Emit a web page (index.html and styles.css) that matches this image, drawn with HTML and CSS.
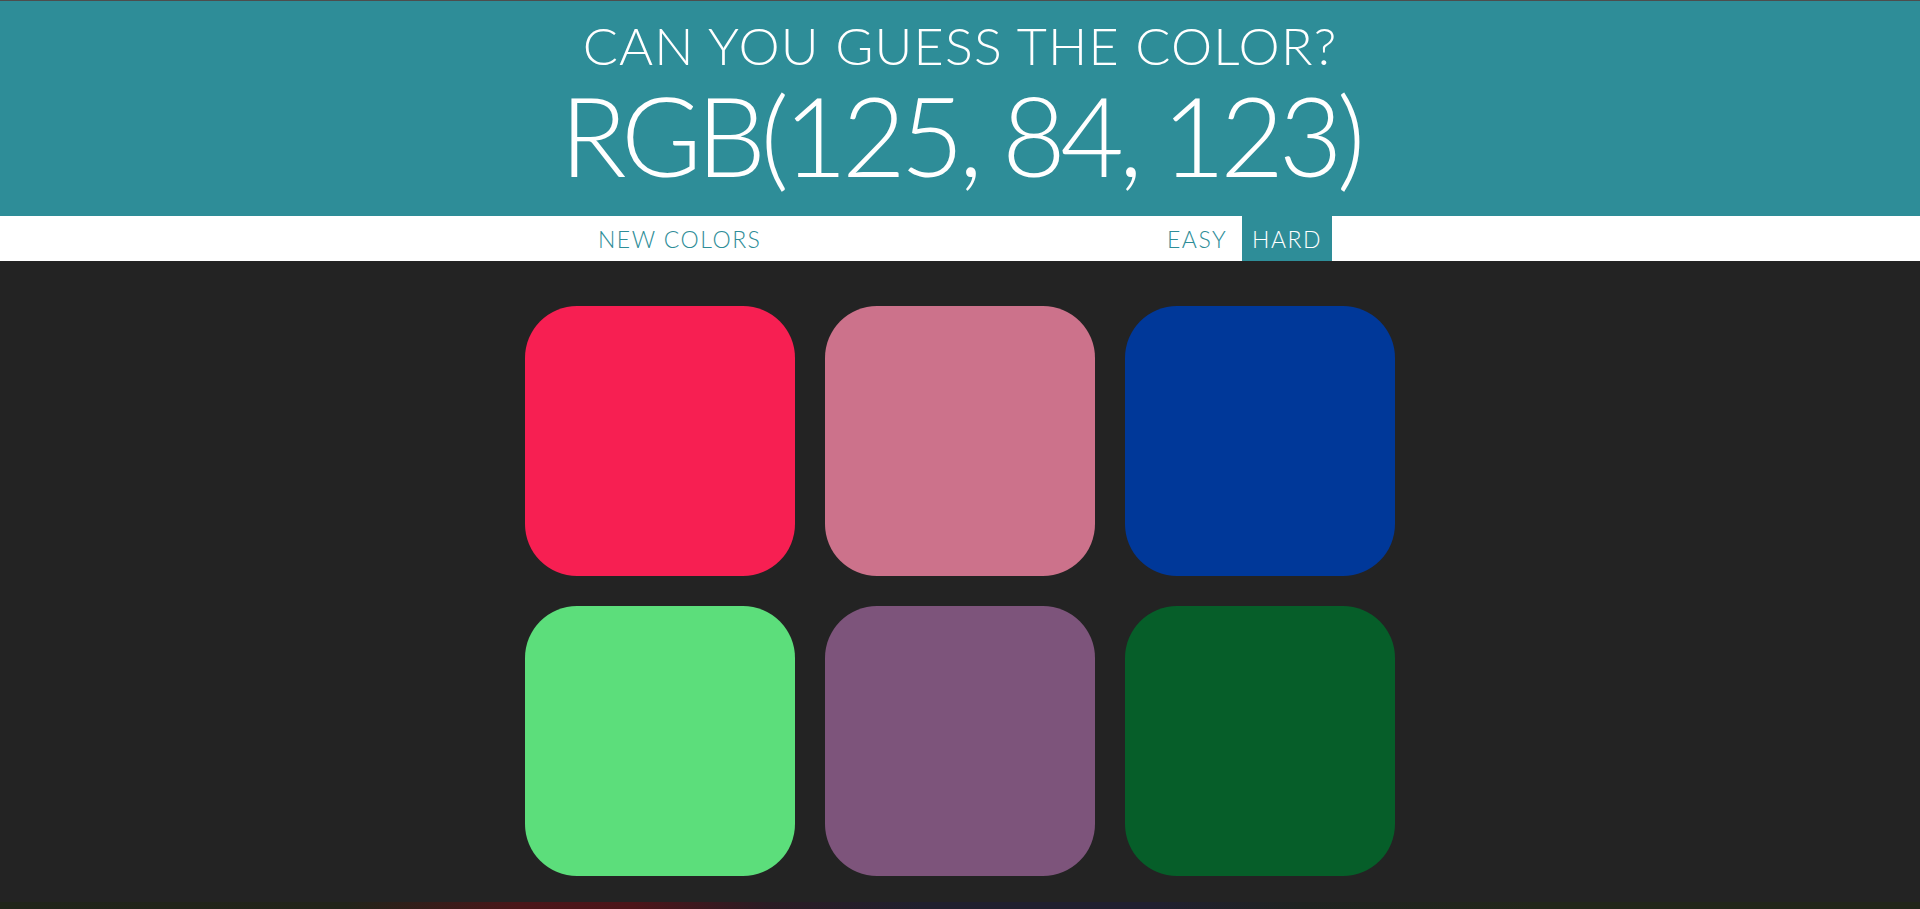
FILE: index.html
```html
<!DOCTYPE html>
<html lang="en">
<head>
<meta charset="utf-8">
<title>Color Game</title>
<link rel="stylesheet" href="styles.css">
</head>
<body>
<header class="banner">
  <h1 class="title">
    <span class="title-line">Can you guess the color?</span>
    <span class="title-rgb">RGB(125, 84, 123)</span>
  </h1>
</header>
<nav class="stripe">
  <div class="stripe-inner">
    <button class="btn">New Colors</button>
    <span class="message"></span>
    <div class="modes">
      <button class="btn">Easy</button>
      <button class="btn selected">Hard</button>
    </div>
  </div>
</nav>
<main class="board">
  <div class="square sq-red"></div>
  <div class="square sq-pink"></div>
  <div class="square sq-blue"></div>
  <div class="square sq-green"></div>
  <div class="square sq-purple"></div>
  <div class="square sq-dkgreen"></div>
</main>
<div class="glow"></div>
</body>
</html>
```
FILE: styles.css
```css
html, body {
  margin: 0;
  padding: 0;
  height: 100%;
}
body {
  background: #232323;
  font-family: "Lato", "Open Sans", sans-serif;
  border-top: 1px solid #4d4d4d;
  box-sizing: border-box;
  display: flex;
  flex-direction: column;
  overflow: hidden;
}
.banner {
  background: #2e8d98;
  color: #fff;
  height: 215px;
  box-sizing: border-box;
}
.title {
  margin: 0;
  font-weight: 300;
  text-align: center;
  text-transform: uppercase;
  display: flex;
  flex-direction: column;
  align-items: center;
}
.title-line {
  font-size: 52px;
  line-height: 52px;
  margin-top: 18px;
  letter-spacing: 1.2px;
}
.title-rgb {
  font-size: 110px;
  line-height: 110px;
  margin-top: 8px;
  letter-spacing: -5.4px;
}
.stripe {
  background: #fff;
  height: 45px;
  display: flex;
  justify-content: center;
}
.stripe-inner {
  width: 744px;
  display: flex;
  justify-content: space-between;
  align-items: stretch;
}
.modes {
  display: flex;
  gap: 5px;
}
.btn {
  border: none;
  background: none;
  color: #2e8d98;
  font-family: "Lato", "Open Sans", sans-serif;
  font-weight: 300;
  font-size: 23px;
  letter-spacing: 1.5px;
  text-transform: uppercase;
  padding: 0 10px;
  height: 100%;
}
.btn.selected {
  background: #2e8d98;
  color: #fff;
}
.board {
  width: 900px;
  margin: 30px auto 0;
  display: grid;
  grid-template-columns: repeat(3, 270px);
  gap: 30px;
  justify-content: center;
  padding: 15px 0;
}
.square {
  width: 270px;
  height: 270px;
  border-radius: 52px;
}
.sq-red { background: #f71f52; }
.sq-pink { background: #cc728b; }
.sq-blue { background: #003899; }
.sq-green { background: #5cde7b; }
.sq-purple { background: #7d547b; }
.sq-dkgreen { background: #065e29; }
.glow {
  margin-top: auto;
  height: 7px;
  background: linear-gradient(90deg, #20251a 0%, #22241a 18%, #4a1619 27%, #4c1519 33%, #2a1c24 40%, #20202e 48%, #202030 60%, #1f2320 68%, #22271a 80%, #22261a 100%);
}
```
